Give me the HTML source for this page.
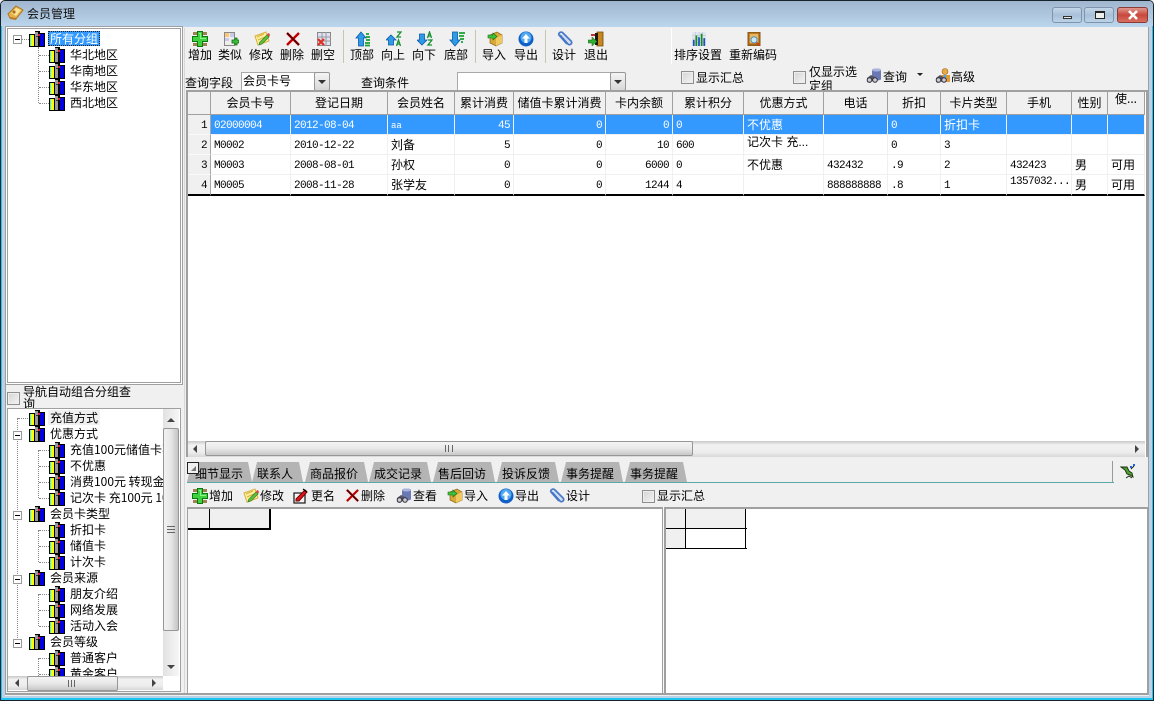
<!DOCTYPE html>
<html lang="zh"><head><meta charset="utf-8"><title>会员管理</title>
<style>
html,body{margin:0;padding:0;width:1154px;height:701px;overflow:hidden;background:#f0f0f0}
body{position:relative;font:12px/14px "WenQuanYi Zen Hei","Noto Sans CJK SC",sans-serif;color:#000}
.a,.t,svg.i{position:absolute}
.t{white-space:nowrap}
.c{text-align:center;width:60px}
.w{background:#fff}
.cb{position:absolute;width:11px;height:11px;border:1px solid #8e8f8f;background:linear-gradient(135deg,#d4d4d4,#f4f4f4);box-shadow:inset 0 0 0 1px #eee}
.sb{position:absolute;background:linear-gradient(#c8c8c8,#f2f2f2 25%,#ededed 70%,#d8d8d8)}
.th{position:absolute;background:linear-gradient(#f4f4f4,#e8e8e8 50%,#c8c8c8);border:1px solid #979797;border-radius:2px;box-sizing:border-box}
table{position:absolute;border-collapse:separate;border-spacing:0;table-layout:fixed}
td,th{padding:0 3px;overflow:hidden;white-space:nowrap;font-weight:normal;box-sizing:border-box}
th{height:23px;background:#f0f0f0;border-right:1px solid #a0a0a0;border-bottom:1px solid #a0a0a0;text-align:center}
td{height:20px;padding-top:2px;border-right:1px solid #f0f0f0;border-bottom:1px solid #f0f0f0;font-family:"Liberation Mono","WenQuanYi Zen Hei",monospace;font-size:11px;letter-spacing:-.6px}
td.z{font:12px/14px "WenQuanYi Zen Hei",sans-serif;letter-spacing:0;padding-top:1px}
td.r{text-align:right}
td.h{background:#f0f0f0;border-right:1px solid #a8a8a8;border-bottom:1px solid #fafafa;text-align:right}
tr.s td:not(.h){background:#3399ff;color:#fff;border-color:#f0f0f0}
tr.l td{border-bottom:2px solid #000;height:21px}
.tab{position:absolute;top:462px;height:20px;background:#b4b4b4;clip-path:polygon(5px 0,calc(100% - 4px) 0,100% 100%,0 100%)}
.ln{position:absolute;width:12px;border-top:1px dotted #888}
.lv{position:absolute;width:0;border-left:1px dotted #888}
.ex{position:absolute;width:7px;height:7px;border:1px solid #999;background:#fff}
.ex:after{content:"";position:absolute;left:1px;top:3px;width:5px;height:1px;background:#000}
.sep{position:absolute;width:1px;background:#c9c5b5}
</style></head><body>
<svg width="0" height="0" style="position:absolute">
<defs>
<symbol id="bk" viewBox="0 0 16 16"><path d="M0 3h6V0h5v2h5v14H0z" fill="#000"/><path d="M1 4h1v11H1z" fill="#33ffff"/><path d="M2 4h3v11H2z" fill="#ffff00"/><path d="M6 1h3v14H6z" fill="#9a9a9a"/><path d="M7 5h2v1H7z" fill="#333"/><path d="M11 3h4v12h-4z" fill="#0000e0"/><path d="M9 3h2v2H9z" fill="#e02020"/></symbol>
<symbol id="add" viewBox="0 0 16 16"><path d="M1 1h4v3H1zM11 1h4v3h-4zM1 12h4v3H1zM11 12h4v3h-4z" fill="#a08050"/><path d="M5 0h6v5h5v6h-5v5H5v-5H0V5h5z" fill="#0a7a10"/><path d="M6 1h4v5h5v4h-5v5H6v-5H1V6h5z" fill="#3fd23f"/><path d="M7 2h2v5h5v1H8V3H7z" fill="#8ff08f"/></symbol>
<symbol id="sim" viewBox="0 0 16 16"><path d="M1.5 1.5h10v13h-10z" fill="#eee" stroke="#888"/><path d="M2 2h4v4H2z" fill="#f8c878"/><path d="M7 2h4v4H7zM2 7h4v3H2z" fill="#c8c8e8"/><path d="M9 9h3V7h2v2h2v3h-2v2h-2v-2H9z" fill="#40c040" stroke="#0a6a0a" stroke-width=".8"/></symbol>
<symbol id="edit" viewBox="0 0 16 16"><path d="M1 5l11-4 3 9-11 4z" fill="#fdf09a" stroke="#d8b040"/><path d="M3 6l7-3M4 9l7-3M5 12l6-2" stroke="#d8b040"/><path d="M6 11l7-7 2 2-7 7-3 1z" fill="#60c040" stroke="#308020" stroke-width=".7"/><path d="M13 3l2-1 1 2-1 2z" fill="#e04040"/></symbol>
<symbol id="del" viewBox="0 0 16 16"><path d="M2 2l12 12M14 2L2 14" stroke="#c00000" stroke-width="2.4" fill="none"/><path d="M2 2l12 12" stroke="#200" stroke-width="1"/></symbol>
<symbol id="clr" viewBox="0 0 16 16"><path d="M1.5 1.5h13v13h-13z" fill="#dfe0f4" stroke="#888"/><path d="M1 6h14M1 10h14M6 1v14M10 1v14" stroke="#999"/><path d="M2 8l6 6M8 8l-6 6" stroke="#e03020" stroke-width="2.2"/></symbol>
<symbol id="top" viewBox="0 0 16 16"><path d="M6 1l5 6H8.500v8h-5V7H1z" fill="#2f9be8" stroke="#0a5aa8" stroke-width=".8"/><path d="M11 3h3M11 6h4M11 9h4M10 12h5M10 14.500h5" stroke="#18a030" stroke-width="1.800"/></symbol>
<symbol id="bot" viewBox="0 0 16 16"><path d="M6 15l5-6H8.500V1h-5v8H1z" fill="#2f9be8" stroke="#0a5aa8" stroke-width=".8"/><path d="M10 2h6M10 5h5M11 8h4M12 11h2" stroke="#18a030" stroke-width="1.800"/></symbol>
<symbol id="upa" viewBox="0 0 16 16"><path d="M5 4l5 5H7.500v5h-5V9H0z" fill="#2f9be8" stroke="#0a5aa8" stroke-width=".8"/><path d="M11 1h4l-4 5h4M10.500 15l2-6 2 6M11.500 13h2" stroke="#149030" stroke-width="1.300" fill="none"/></symbol>
<symbol id="dna" viewBox="0 0 16 16"><path d="M5 14l5-5H7.500V3h-5v6H0z" fill="#2f9be8" stroke="#0a5aa8" stroke-width=".8"/><path d="M10.500 7l2-6 2 6M11.500 5h2M11 9h4l-4 5h4" stroke="#149030" stroke-width="1.300" fill="none"/></symbol>
<symbol id="imp" viewBox="0 0 16 16"><path d="M3 4l7-3 5 3v8l-6 3-6-3z" fill="#d9a838" stroke="#8a6a18" stroke-width=".7"/><path d="M9 7v8l6-3V4z" fill="#f0c860"/><path d="M1 4h5V2l4 3.500L6 9V7H1z" fill="#40c040" stroke="#107010" stroke-width=".6"/></symbol>
<symbol id="exp" viewBox="0 0 16 16"><circle cx="8" cy="8" r="7.500" fill="#1060c8"/><circle cx="8" cy="6.500" r="5.500" fill="#50a8f0"/><path d="M8 3l4 4.500H9.500V12h-3V7.500H4z" fill="#fff"/></symbol>
<symbol id="des" viewBox="0 0 16 16"><path d="M3 4l8 9c2 2 5-1 3-3L6 2C4 0 1 2 2 4l8 9" fill="none" stroke="#4878c8" stroke-width="1.800"/><path d="M5 3l8 9" stroke="#c0d8f8"/></symbol>
<symbol id="out" viewBox="0 0 16 16"><path d="M9 1h6v14H9z" fill="#c88820" stroke="#704808" stroke-width=".8"/><path d="M7 2h3v12H7z" fill="#201810"/><path d="M0 9h4V6l5 4.500L4 15v-3H0z" fill="#30b030" stroke="#106010" stroke-width=".5"/><path d="M3 3h4v2H3z" fill="#c03030"/></symbol>
<symbol id="srt" viewBox="0 0 16 16"><path d="M0 0h16v16H0z" fill="#dfe6f2"/><path d="M0 4h16M0 8h16M0 12h16M4 0v16M8 0v16M12 0v16" stroke="#b8c0d0" stroke-width=".6"/><path d="M1 16V9h2v7zM7 16V6h2v10z" fill="#2050c0"/><path d="M4 16V4h2v12zM10 16V2h2v14z" fill="#189020"/><path d="M13 16V7h2v9z" fill="#2050c0"/></symbol>
<symbol id="rec" viewBox="0 0 16 16"><path d="M1 0h14v16H1z" fill="#a86818" stroke="#603808" stroke-width=".6"/><path d="M3 2h10v11H3z" fill="#e8b860"/><circle cx="8" cy="9" r="3.500" fill="#c8e8f8" stroke="#4088c0"/><path d="M11 12l3 3" stroke="#d04010" stroke-width="2"/></symbol>
<symbol id="qry" viewBox="0 0 16 16"><path d="M6 2c0-2 9-2 9 0v9c0 2-9 2-9 0z" fill="#6a78b4"/><path d="M6 2c0-2 9-2 9 0s-9 2-9 0z" fill="#a8b4dc"/><path d="M1 10l4-3 6 3-2 4-3-1-2 2-3-1z" fill="#556"/><circle cx="3.500" cy="12" r="2.300" fill="#ccc" stroke="#334"/><circle cx="9" cy="12" r="2.300" fill="#ccc" stroke="#334"/></symbol>
<symbol id="adv" viewBox="0 0 16 16"><circle cx="10" cy="3.500" r="3" fill="#e8a848" stroke="#a06818" stroke-width=".6"/><path d="M6 7h9v7H6z" fill="#e09838"/><path d="M9 7h2v7H9z" fill="#48a8e0"/><path d="M1 10l4-3 5 3-2 4-3-1-2 2-2-1z" fill="#556"/><circle cx="3.500" cy="12" r="2.300" fill="#ccc" stroke="#334"/><circle cx="9" cy="12" r="2.300" fill="#ccc" stroke="#334"/></symbol>
<symbol id="ren" viewBox="0 0 16 16"><path d="M1 5h11v10H1z" fill="#f4f4f4" stroke="#222" stroke-width="1.300"/><path d="M3 11l9-9 2 2-8 9H3z" fill="#e01818" stroke="#700"/><path d="M10 1l4 3" stroke="#000" stroke-width="1.300"/></symbol>
<symbol id="liz" viewBox="0 0 16 16"><path d="M1 3h6l2 4 3 2 1 4-3-2-3-1-2-4z" fill="#50a030" stroke="#183010" stroke-width=".9"/><path d="M6 14l3-2 3 2M11 5l3-3" stroke="#183010" fill="none"/><path d="M10 2h2v2h-2zM13 0h2v2h-2z" fill="#2060e0"/></symbol>
</defs></svg>

<!-- window frame -->
<div class="a" style="left:0;top:0;width:1154px;height:701px;background:#b7d3ea;box-sizing:border-box;border:1px solid #17232c;border-radius:5px 5px 0 0"></div>
<div class="a" style="left:1px;top:1px;width:1152px;height:26px;background:linear-gradient(#a0b6ce,#bad6ee);border-radius:4px 4px 0 0"></div>
<div class="a" style="left:1152px;top:26px;width:1px;height:674px;background:#20c4ee"></div>
<div class="a" style="left:1px;top:26px;width:1px;height:674px;background:#20c4ee"></div>
<div class="a" style="left:1px;top:698px;width:1152px;height:2px;background:#20c4ee"></div>
<div class="a" style="left:5px;top:27px;width:1144px;height:669px;background:#f0f0f0"></div>
<svg class="i" style="left:7px;top:5px" width="17" height="17" viewBox="0 0 17 17"><path d="M1 9l8-8 7 4-7 9-6-1z" fill="#e8b048" stroke="#a87820"/><path d="M4 8l5-5 5 2-5 6z" fill="#f8e498"/><path d="M1 9l2 5 6 1v-2l-6-1z" fill="#b87828"/><circle cx="7" cy="7" r="1.600" fill="#b07020"/></svg>
<div class="t" style="left:27px;top:7px;color:#101010">会员管理</div>
<div class="a" style="left:1052px;top:7px;width:30px;height:16px;border-radius:3px;box-sizing:border-box;border:1px solid #7f94ac;background:linear-gradient(#c4d6e8,#a8c0d8 50%,#bcd2e6)"><div class="a" style="left:10px;top:8px;width:9px;height:3px;border:1px solid #333;background:#e8e8e8;box-sizing:border-box"></div></div>
<div class="a" style="left:1084px;top:7px;width:30px;height:16px;border-radius:3px;box-sizing:border-box;border:1px solid #7f94ac;background:linear-gradient(#c4d6e8,#a8c0d8 50%,#bcd2e6)"><div class="a" style="left:10px;top:3px;width:10px;height:8px;border:1px solid #222;border-top-width:2px;box-sizing:border-box;background:#eee"></div></div>
<div class="a" style="left:1117px;top:7px;width:31px;height:16px;border-radius:3px;box-sizing:border-box;border:1px solid #8c3a34;background:linear-gradient(#e09890,#c8483c 50%,#d87060)"><svg class="a" style="left:9px;top:2px" width="12" height="10"><path d="M2 1l8 8M10 1L2 9" stroke="#fff" stroke-width="2.600"/></svg></div>

<!-- left upper tree -->
<div class="a w" style="left:7px;top:28px;width:172px;height:353px;border:1px solid #a0a0a0;outline:1px solid #fff;box-shadow:0 0 0 2px #a0a0a0"></div>
<div class="lv" style="left:38px;top:47px;height:56px"></div>
<div class="ln" style="left:39px;top:55px"></div><div class="ln" style="left:39px;top:71px"></div><div class="ln" style="left:39px;top:87px"></div><div class="ln" style="left:39px;top:103px"></div>
<div class="ln" style="left:22px;top:39px;width:7px"></div>
<div class="ex" style="left:13px;top:35px"></div>
<svg class="i" style="left:29px;top:31px" width="16" height="16"><use href="#bk"/></svg>
<div class="a" style="left:48px;top:31px;width:52px;height:15px;background:#3399ff;outline:1px dotted #222;outline-offset:-1px"></div>
<div class="t" style="left:50px;top:32px;color:#fff">所有分组</div>
<svg class="i" style="left:49px;top:47px" width="16" height="16"><use href="#bk"/></svg><div class="t" style="left:70px;top:48px">华北地区</div>
<svg class="i" style="left:49px;top:63px" width="16" height="16"><use href="#bk"/></svg><div class="t" style="left:70px;top:64px">华南地区</div>
<svg class="i" style="left:49px;top:79px" width="16" height="16"><use href="#bk"/></svg><div class="t" style="left:70px;top:80px">华东地区</div>
<svg class="i" style="left:49px;top:95px" width="16" height="16"><use href="#bk"/></svg><div class="t" style="left:70px;top:96px">西北地区</div>

<!-- left lower -->
<div class="cb" style="left:7px;top:392px"></div>
<div class="t" style="left:23px;top:385px">导航自动组合分组查</div>
<div class="a" style="left:23px;top:397px;width:20px;height:11px;overflow:hidden"><div class="t" style="left:0;top:0">询</div></div>
<div class="a w" style="left:7px;top:408px;width:172px;height:282px;border:1px solid #a0a0a0;overflow:hidden"></div>
<div class="a" style="left:8px;top:409px;width:155px;height:267px;overflow:hidden">
<div class="lv" style="left:30px;top:41px;height:48px"></div><div class="lv" style="left:30px;top:121px;height:32px"></div><div class="lv" style="left:30px;top:185px;height:32px"></div><div class="lv" style="left:30px;top:249px;height:20px"></div>
<div class="lv" style="left:9px;top:9px;height:230px"></div>
<div class="ln" style="left:10px;top:9px;width:10px"></div>
<div class="ln" style="left:31px;top:41px"></div><div class="ln" style="left:31px;top:57px"></div><div class="ln" style="left:31px;top:73px"></div><div class="ln" style="left:31px;top:89px"></div>
<div class="ln" style="left:31px;top:121px"></div><div class="ln" style="left:31px;top:137px"></div><div class="ln" style="left:31px;top:153px"></div>
<div class="ln" style="left:31px;top:185px"></div><div class="ln" style="left:31px;top:201px"></div><div class="ln" style="left:31px;top:217px"></div>
<div class="ln" style="left:31px;top:249px"></div><div class="ln" style="left:31px;top:265px"></div>
<div class="ex" style="left:5px;top:22px"></div><div class="ex" style="left:5px;top:102px"></div><div class="ex" style="left:5px;top:166px"></div><div class="ex" style="left:5px;top:230px"></div>
<div class="a" style="left:40px;top:1px;width:52px;height:15px;background:#f0f0f0"></div>
<svg class="i" style="left:21px;top:1px" width="16" height="16"><use href="#bk"/></svg><div class="t" style="left:42px;top:2px">充值方式</div>
<svg class="i" style="left:21px;top:17px" width="16" height="16"><use href="#bk"/></svg><div class="t" style="left:42px;top:18px">优惠方式</div>
<svg class="i" style="left:41px;top:33px" width="16" height="16"><use href="#bk"/></svg><div class="t" style="left:62px;top:34px">充值100元储值卡不打折</div>
<svg class="i" style="left:41px;top:49px" width="16" height="16"><use href="#bk"/></svg><div class="t" style="left:62px;top:50px">不优惠</div>
<svg class="i" style="left:41px;top:65px" width="16" height="16"><use href="#bk"/></svg><div class="t" style="left:62px;top:66px">消费100元 转现金</div>
<svg class="i" style="left:41px;top:81px" width="16" height="16"><use href="#bk"/></svg><div class="t" style="left:62px;top:82px">记次卡 充100元 10次</div>
<svg class="i" style="left:21px;top:97px" width="16" height="16"><use href="#bk"/></svg><div class="t" style="left:42px;top:98px">会员卡类型</div>
<svg class="i" style="left:41px;top:113px" width="16" height="16"><use href="#bk"/></svg><div class="t" style="left:62px;top:114px">折扣卡</div>
<svg class="i" style="left:41px;top:129px" width="16" height="16"><use href="#bk"/></svg><div class="t" style="left:62px;top:130px">储值卡</div>
<svg class="i" style="left:41px;top:145px" width="16" height="16"><use href="#bk"/></svg><div class="t" style="left:62px;top:146px">计次卡</div>
<svg class="i" style="left:21px;top:161px" width="16" height="16"><use href="#bk"/></svg><div class="t" style="left:42px;top:162px">会员来源</div>
<svg class="i" style="left:41px;top:177px" width="16" height="16"><use href="#bk"/></svg><div class="t" style="left:62px;top:178px">朋友介绍</div>
<svg class="i" style="left:41px;top:193px" width="16" height="16"><use href="#bk"/></svg><div class="t" style="left:62px;top:194px">网络发展</div>
<svg class="i" style="left:41px;top:209px" width="16" height="16"><use href="#bk"/></svg><div class="t" style="left:62px;top:210px">活动入会</div>
<svg class="i" style="left:21px;top:225px" width="16" height="16"><use href="#bk"/></svg><div class="t" style="left:42px;top:226px">会员等级</div>
<svg class="i" style="left:41px;top:241px" width="16" height="16"><use href="#bk"/></svg><div class="t" style="left:62px;top:242px">普通客户</div>
<svg class="i" style="left:41px;top:257px" width="16" height="16"><use href="#bk"/></svg><div class="t" style="left:62px;top:258px">黄金客户</div>
</div>
<!-- left scrollbars -->
<div class="a" style="left:163px;top:409px;width:16px;height:267px;background:linear-gradient(90deg,#e2e2e2,#f6f6f6)"></div>
<div class="th" style="left:163px;top:428px;width:16px;height:203px;background:linear-gradient(90deg,#f2f2f2,#e6e6e6 50%,#c4c4c4)"></div>
<svg class="i" style="left:167px;top:418px" width="8" height="5"><path d="M4 0l4 4H0z" fill="#444"/></svg>
<svg class="i" style="left:167px;top:665px" width="8" height="5"><path d="M0 0h8L4 4z" fill="#444"/></svg>
<div class="a" style="left:167px;top:526px;width:8px;height:7px;border-top:1px solid #666;border-bottom:1px solid #666;box-sizing:border-box"><div class="a" style="left:0;top:2px;width:8px;height:1px;background:#666"></div></div>
<div class="sb" style="left:8px;top:676px;width:155px;height:14px"></div>
<div class="th" style="left:27px;top:676px;width:91px;height:15px"></div>
<svg class="i" style="left:15px;top:679px" width="5" height="8"><path d="M4 0v8L0 4z" fill="#444"/></svg>
<svg class="i" style="left:152px;top:679px" width="5" height="8"><path d="M0 0v8l4-4z" fill="#444"/></svg>
<div class="a" style="left:68px;top:680px;width:7px;height:7px;border-left:1px solid #666;border-right:1px solid #666;box-sizing:border-box"><div class="a" style="left:2px;top:0;width:1px;height:7px;background:#666"></div></div>
<div class="a" style="left:184px;top:28px;width:1px;height:665px;background:#d8d8d8"></div>

<!-- toolbar -->
<svg class="i" style="left:192px;top:31px" width="16" height="16"><use href="#add"/></svg><div class="t c" style="left:170px;top:48px">增加</div>
<svg class="i" style="left:223px;top:31px" width="16" height="16"><use href="#sim"/></svg><div class="t c" style="left:200px;top:48px">类似</div>
<svg class="i" style="left:254px;top:31px" width="16" height="16"><use href="#edit"/></svg><div class="t c" style="left:231px;top:48px">修改</div>
<svg class="i" style="left:285px;top:31px" width="16" height="16"><use href="#del"/></svg><div class="t c" style="left:262px;top:48px">删除</div>
<svg class="i" style="left:316px;top:31px" width="16" height="16"><use href="#clr"/></svg><div class="t c" style="left:293px;top:48px">删空</div>
<div class="sep" style="left:343px;top:30px;height:33px"></div>
<svg class="i" style="left:355px;top:31px" width="16" height="16"><use href="#top"/></svg><div class="t c" style="left:332px;top:48px">顶部</div>
<svg class="i" style="left:386px;top:31px" width="16" height="16"><use href="#upa"/></svg><div class="t c" style="left:363px;top:48px">向上</div>
<svg class="i" style="left:417px;top:31px" width="16" height="16"><use href="#dna"/></svg><div class="t c" style="left:394px;top:48px">向下</div>
<svg class="i" style="left:449px;top:31px" width="16" height="16"><use href="#bot"/></svg><div class="t c" style="left:426px;top:48px">底部</div>
<div class="sep" style="left:475px;top:30px;height:33px"></div>
<svg class="i" style="left:487px;top:31px" width="16" height="16"><use href="#imp"/></svg><div class="t c" style="left:464px;top:48px">导入</div>
<svg class="i" style="left:518px;top:31px" width="16" height="16"><use href="#exp"/></svg><div class="t c" style="left:496px;top:48px">导出</div>
<div class="sep" style="left:545px;top:30px;height:33px"></div>
<svg class="i" style="left:557px;top:31px" width="16" height="16"><use href="#des"/></svg><div class="t c" style="left:534px;top:48px">设计</div>
<svg class="i" style="left:588px;top:31px" width="16" height="16"><use href="#out"/></svg><div class="t c" style="left:566px;top:48px">退出</div>
<div class="sep" style="left:671px;top:28px;height:36px;background:#fff"></div>
<svg class="i" style="left:692px;top:32px" width="14" height="14"><use href="#srt"/></svg><div class="t c" style="left:668px;top:48px">排序设置</div>
<svg class="i" style="left:747px;top:32px" width="14" height="14"><use href="#rec"/></svg><div class="t c" style="left:723px;top:48px">重新编码</div>

<!-- query row -->
<div class="t" style="left:185px;top:76px">查询字段</div>
<div class="a w" style="left:241px;top:72px;width:87px;height:19px;border:1px solid #a8a8a8;box-sizing:border-box"></div>
<div class="t" style="left:243px;top:74px">会员卡号</div>
<div class="th" style="left:314px;top:72px;width:16px;height:19px;background:linear-gradient(#f4f4f4,#d8d8d8)"><svg class="a" style="left:3px;top:7px" width="8" height="5"><path d="M0 0h8L4 4z" fill="#333"/></svg></div>
<div class="t" style="left:361px;top:76px">查询条件</div>
<div class="a w" style="left:457px;top:72px;width:155px;height:19px;border:1px solid #a8a8a8;box-sizing:border-box"></div>
<div class="th" style="left:610px;top:72px;width:16px;height:19px;background:linear-gradient(#f4f4f4,#d8d8d8)"><svg class="a" style="left:3px;top:7px" width="8" height="5"><path d="M0 0h8L4 4z" fill="#333"/></svg></div>
<div class="cb" style="left:681px;top:71px"></div><div class="t" style="left:696px;top:71px">显示汇总</div>
<div class="cb" style="left:793px;top:71px"></div><div class="t" style="left:809px;top:65px">仅显示选</div>
<div class="a" style="left:809px;top:79px;width:40px;height:11px;overflow:hidden"><div class="t" style="left:0;top:0">定组</div></div>
<svg class="i" style="left:866px;top:68px" width="16" height="16"><use href="#qry"/></svg><div class="t" style="left:883px;top:70px">查询</div>
<svg class="i" style="left:917px;top:73px" width="6" height="4"><path d="M0 0h6L3 3z" fill="#222"/></svg>
<svg class="i" style="left:935px;top:68px" width="16" height="16"><use href="#adv"/></svg><div class="t" style="left:951px;top:70px">高级</div>

<!-- main grid -->
<div class="a w" style="left:186px;top:90px;width:960px;height:367px;border-top:2px solid #a0a0a0;border-left:2px solid #a0a0a0;box-sizing:border-box"></div>
<table style="left:188px;top:92px;width:957px">
<colgroup><col style="width:23px"><col style="width:80px"><col style="width:97px"><col style="width:67px"><col style="width:59px"><col style="width:92px"><col style="width:67px"><col style="width:71px"><col style="width:80px"><col style="width:64px"><col style="width:53px"><col style="width:66px"><col style="width:65px"><col style="width:36px"><col style="width:37px"></colgroup>
<tr><th></th><th>会员卡号</th><th>登记日期</th><th>会员姓名</th><th>累计消费</th><th>储值卡累计消费</th><th>卡内余额</th><th>累计积分</th><th>优惠方式</th><th>电话</th><th>折扣</th><th>卡片类型</th><th>手机</th><th>性别</th><th style="vertical-align:top;padding:0;text-align:center">使...</th></tr>
<tr class="s"><td class="h">1</td><td>02000004</td><td>2012-08-04</td><td style="font-size:9px;letter-spacing:0">aa</td><td class="r">45</td><td class="r">0</td><td class="r">0</td><td>0</td><td class="z">不优惠</td><td></td><td>0</td><td class="z">折扣卡</td><td></td><td></td><td></td></tr>
<tr><td class="h">2</td><td>M0002</td><td>2010-12-22</td><td class="z">刘备</td><td class="r">5</td><td class="r">0</td><td class="r">10</td><td>600</td><td class="z" style="vertical-align:top;padding-top:0">记次卡 充...</td><td></td><td>0</td><td>3</td><td></td><td></td><td></td></tr>
<tr><td class="h">3</td><td>M0003</td><td>2008-08-01</td><td class="z">孙权</td><td class="r">0</td><td class="r">0</td><td class="r">6000</td><td>0</td><td class="z">不优惠</td><td>432432</td><td>.9</td><td>2</td><td>432423</td><td class="z">男</td><td class="z">可用</td></tr>
<tr class="l"><td class="h">4</td><td>M0005</td><td>2008-11-28</td><td class="z">张学友</td><td class="r">0</td><td class="r">0</td><td class="r">1244</td><td>4</td><td class="z"></td><td>888888888</td><td>.8</td><td>1</td><td style="vertical-align:top;padding-top:0">1357032...</td><td class="z">男</td><td class="z">可用</td></tr>
</table>
<div class="sb" style="left:188px;top:441px;width:957px;height:16px"></div>
<div class="th" style="left:205px;top:441px;width:488px;height:15px"></div>
<svg class="i" style="left:193px;top:445px" width="5" height="8"><path d="M4 0v8L0 4z" fill="#444"/></svg>
<svg class="i" style="left:1135px;top:445px" width="5" height="8"><path d="M0 0v8l4-4z" fill="#444"/></svg>
<div class="a" style="left:445px;top:445px;width:8px;height:7px;border-left:1px solid #666;border-right:1px solid #666;box-sizing:border-box"><div class="a" style="left:2px;top:0;width:1px;height:7px;background:#666"></div></div>
<div class="a" style="left:1146px;top:90px;width:2px;height:367px;background:#a0a0a0"></div>

<!-- tabs -->
<div class="a" style="left:187px;top:461px;width:926px;height:21px;border-right:1px solid #999;box-sizing:border-box"></div>
<div class="a" style="left:187px;top:482px;width:927px;height:1px;background:#5aa8a8"></div>
<div class="tab" style="left:187px;width:65px"></div><div class="t" style="left:195px;top:467px">细节显示</div>
<div class="tab" style="left:252px;width:51px"></div><div class="t" style="left:257px;top:467px">联系人</div>
<div class="tab" style="left:305px;width:63px"></div><div class="t" style="left:310px;top:467px">商品报价</div>
<div class="tab" style="left:369px;width:62px"></div><div class="t" style="left:374px;top:467px">成交记录</div>
<div class="tab" style="left:433px;width:62px"></div><div class="t" style="left:438px;top:467px">售后回访</div>
<div class="tab" style="left:497px;width:62px"></div><div class="t" style="left:502px;top:467px">投诉反馈</div>
<div class="tab" style="left:561px;width:62px"></div><div class="t" style="left:566px;top:467px">事务提醒</div>
<div class="tab" style="left:625px;width:62px"></div><div class="t" style="left:630px;top:467px">事务提醒</div>
<div class="a" style="left:187px;top:462px;width:10px;height:10px;border:1px solid #222;background:#f0f0f0"><svg class="a" style="left:3px;top:3px" width="6" height="6"><path d="M5 0v5H0z" fill="#777"/></svg></div>
<svg class="i" style="left:1120px;top:464px" width="16" height="16"><use href="#liz"/></svg>

<!-- bottom toolbar -->
<svg class="i" style="left:192px;top:488px" width="16" height="16"><use href="#add"/></svg><div class="t" style="left:209px;top:489px">增加</div>
<svg class="i" style="left:243px;top:488px" width="16" height="16"><use href="#edit"/></svg><div class="t" style="left:260px;top:489px">修改</div>
<svg class="i" style="left:293px;top:488px" width="16" height="16"><use href="#ren"/></svg><div class="t" style="left:311px;top:489px">更名</div>
<svg class="i" style="left:345px;top:488px" width="15" height="15"><use href="#del"/></svg><div class="t" style="left:361px;top:489px">删除</div>
<svg class="i" style="left:396px;top:488px" width="16" height="16"><use href="#qry"/></svg><div class="t" style="left:413px;top:489px">查看</div>
<svg class="i" style="left:447px;top:488px" width="16" height="16"><use href="#imp"/></svg><div class="t" style="left:464px;top:489px">导入</div>
<svg class="i" style="left:498px;top:488px" width="16" height="16"><use href="#exp"/></svg><div class="t" style="left:515px;top:489px">导出</div>
<svg class="i" style="left:549px;top:488px" width="16" height="16"><use href="#des"/></svg><div class="t" style="left:566px;top:489px">设计</div>
<div class="cb" style="left:642px;top:490px"></div><div class="t" style="left:657px;top:489px">显示汇总</div>

<!-- bottom grids -->
<div class="a w" style="left:187px;top:507px;width:476px;height:186px;border-top:2px solid #a0a0a0;border-left:1px solid #a0a0a0;border-right:1px solid #a0a0a0;box-sizing:border-box"></div>
<div class="a" style="left:188px;top:509px;width:21px;height:19px;background:#f0f0f0;border-right:1px solid #000"></div>
<div class="a" style="left:210px;top:509px;width:59px;height:19px;background:#f0f0f0;border-right:2px solid #000"></div>
<div class="a" style="left:188px;top:528px;width:83px;height:2px;background:#000"></div>
<div class="a" style="left:663px;top:507px;width:1px;height:186px;background:#f8f8f8"></div>
<div class="a w" style="left:664px;top:507px;width:483px;height:186px;border-top:2px solid #a0a0a0;border-left:2px solid #a0a0a0;box-sizing:border-box"></div>
<div class="a" style="left:666px;top:509px;width:19px;height:19px;background:#f0f0f0;border-right:1px solid #000"></div>
<div class="a" style="left:686px;top:509px;width:59px;height:19px;background:#f0f0f0;border-right:1px solid #000"></div>
<div class="a" style="left:666px;top:528px;width:81px;height:1px;background:#000"></div>
<div class="a" style="left:666px;top:529px;width:19px;height:19px;background:#f0f0f0;border-right:1px solid #000"></div>
<div class="a" style="left:686px;top:529px;width:59px;height:19px;border-right:1px solid #000"></div>
<div class="a" style="left:666px;top:548px;width:81px;height:1px;background:#000"></div>
<div class="a" style="left:6px;top:693px;width:1142px;height:2px;background:#a0a0a0"></div>
<div class="a" style="left:1147px;top:507px;width:1px;height:188px;background:#a0a0a0"></div>
<div class="a" style="left:1148px;top:27px;width:1px;height:668px;background:#a0a0a0"></div>
<div class="a" style="left:5px;top:27px;width:1px;height:668px;background:#a0a0a0"></div>
</body></html>
